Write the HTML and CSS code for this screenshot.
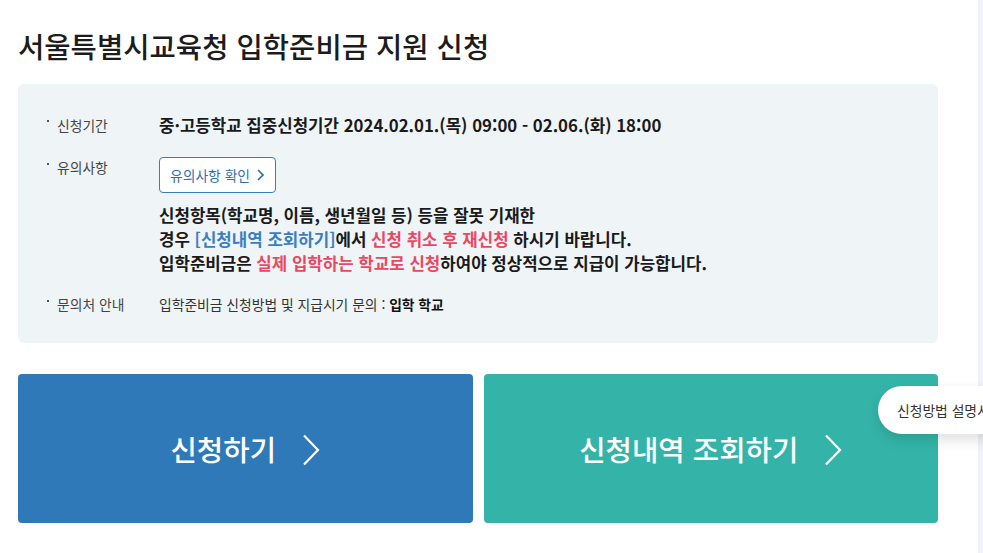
FILE: index.html
```html
<!DOCTYPE html>
<html lang="ko">
<head>
<meta charset="utf-8">
<title>서울특별시교육청 입학준비금 지원 신청</title>
<link rel="stylesheet" href="styles.css">
</head>
<body>
<div class="page">
  <main class="main">
    <h1 class="title">서울특별시교육청 입학준비금 지원 신청</h1>
    <section class="info">
      <div class="row row-period">
        <div class="label">신청기간</div>
        <div class="value strong">중·고등학교 집중신청기간 2024.02.01.(목) 09:00 - 02.06.(화) 18:00</div>
      </div>
      <div class="row row-notice">
        <div class="label">유의사항</div>
        <div class="value">
          <a class="notice-btn" href="#">유의사항 확인
            <svg class="small-chev" viewBox="0 0 7 12" width="7" height="12"><polyline points="1,1 6,6 1,11" fill="none" stroke="#2f6fae" stroke-width="1.6"/></svg>
          </a>
          <p class="notice-text">신청항목(학교명, 이름, 생년월일 등) 등을 잘못 기재한<br>경우 <span class="blue">[신청내역 조회하기]</span>에서 <span class="red">신청 취소 후 재신청</span> 하시기 바랍니다.<br>입학준비금은 <span class="red">실제 입학하는 학교로 신청</span>하여야 정상적으로 지급이 가능합니다.</p>
        </div>
      </div>
      <div class="row row-contact">
        <div class="label">문의처 안내</div>
        <div class="value contact">입학준비금 신청방법 및 지급시기 문의 : <b>입학 학교</b></div>
      </div>
    </section>
    <div class="actions">
      <a class="action action-apply" href="#"><span>신청하기</span>
        <svg class="big-chev" viewBox="0 0 18 32" width="18" height="32"><polyline points="2,1.5 16,16 2,30.5" fill="none" stroke="#fff" stroke-width="2.2"/></svg>
      </a>
      <a class="action action-check" href="#"><span>신청내역 조회하기</span>
        <svg class="big-chev" viewBox="0 0 18 32" width="18" height="32"><polyline points="2,1.5 16,16 2,30.5" fill="none" stroke="#fff" stroke-width="2.2"/></svg>
      </a>
    </div>
  </main>
  <aside class="side"></aside>
  <a class="guide-pill" href="#">신청방법 설명서</a>
</div>
</body>
</html>
```

FILE: styles.css
```css
html, body {
  margin: 0;
  padding: 0;
  background: #fff;
  font-family: "Noto Sans CJK KR", "Noto Sans", sans-serif;
  color: #222;
}
a { text-decoration: none; }

.page {
  display: flex;
  width: 983px;
  height: 553px;
  overflow: hidden;
  position: relative;
}

.main {
  flex: none;
  width: 920px;
  padding: 0 40px 0 18px;
}

.side {
  flex: 1;
  background: #eff2f6;
}

.title {
  margin: 0 0 19px;
  padding-top: 27px;
  font-size: 28.6px;
  line-height: 38px;
  font-weight: 500;
  letter-spacing: 0;
  color: #1c1c1c;
  white-space: nowrap;
}

.info {
  background: #eff4f7;
  border-radius: 6px;
  padding: 30px 28px 29px;
  display: flex;
  flex-direction: column;
}

.row {
  display: flex;
}
.label {
  flex: none;
  width: 113px;
  font-size: 13.8px;
  line-height: 22px;
  color: #444;
  position: relative;
  padding-left: 11px;
  box-sizing: border-box;
}
.label::before {
  content: "";
  position: absolute;
  left: 1px;
  top: 6px;
  width: 2px;
  height: 2px;
  background: #555;
}
.value {
  flex: 1;
}
.strong {
  font-size: 16.8px;
  line-height: 22px;
  font-weight: 700;
  color: #1a1a1a;
}

.row-notice { margin-top: 21px; }
.row-notice .label { line-height: 20px; }
.notice-btn {
  display: inline-flex;
  align-items: center;
  gap: 7px;
  height: 36px;
  box-sizing: border-box;
  padding: 0 11px 0 10px;
  border: 1px solid #3b7cbd;
  border-radius: 4px;
  background: #fff;
  color: #2f6fae;
  font-size: 13.8px;
}
.small-chev { display: block; }
.notice-text {
  margin: 10px 0 0;
  font-size: 16.8px;
  line-height: 24px;
  font-weight: 700;
  color: #1a1a1a;
}
.blue { color: #3a7ec2; }
.red { color: #ea4862; }

.row-contact { margin-top: 19px; }
.row-contact .label { line-height: 20px; }
.contact {
  font-size: 13.8px;
  line-height: 20px;
  color: #333;
}
.contact b { color: #111; font-weight: 700; }

.actions {
  display: flex;
  gap: 11px;
  margin-top: 31px;
}
.action {
  flex: 1;
  height: 149px;
  border-radius: 4px;
  display: flex;
  align-items: center;
  justify-content: center;
  gap: 26px;
  color: #fff;
  font-size: 28.7px;
  font-weight: 500;
}
.action-apply { background: #3079b8; }
.action-check { background: #34b4a8; }
.big-chev { display: block; margin-top: 2px; }

.guide-pill {
  position: absolute;
  left: 878px;
  top: 386px;
  height: 48px;
  padding: 0 22px 0 19px;
  border-radius: 24px;
  background: #fff;
  box-shadow: 0 6px 14px rgba(0, 0, 0, 0.12);
  display: flex;
  align-items: center;
  font-size: 13.8px;
  color: #333;
  white-space: nowrap;
}
```
